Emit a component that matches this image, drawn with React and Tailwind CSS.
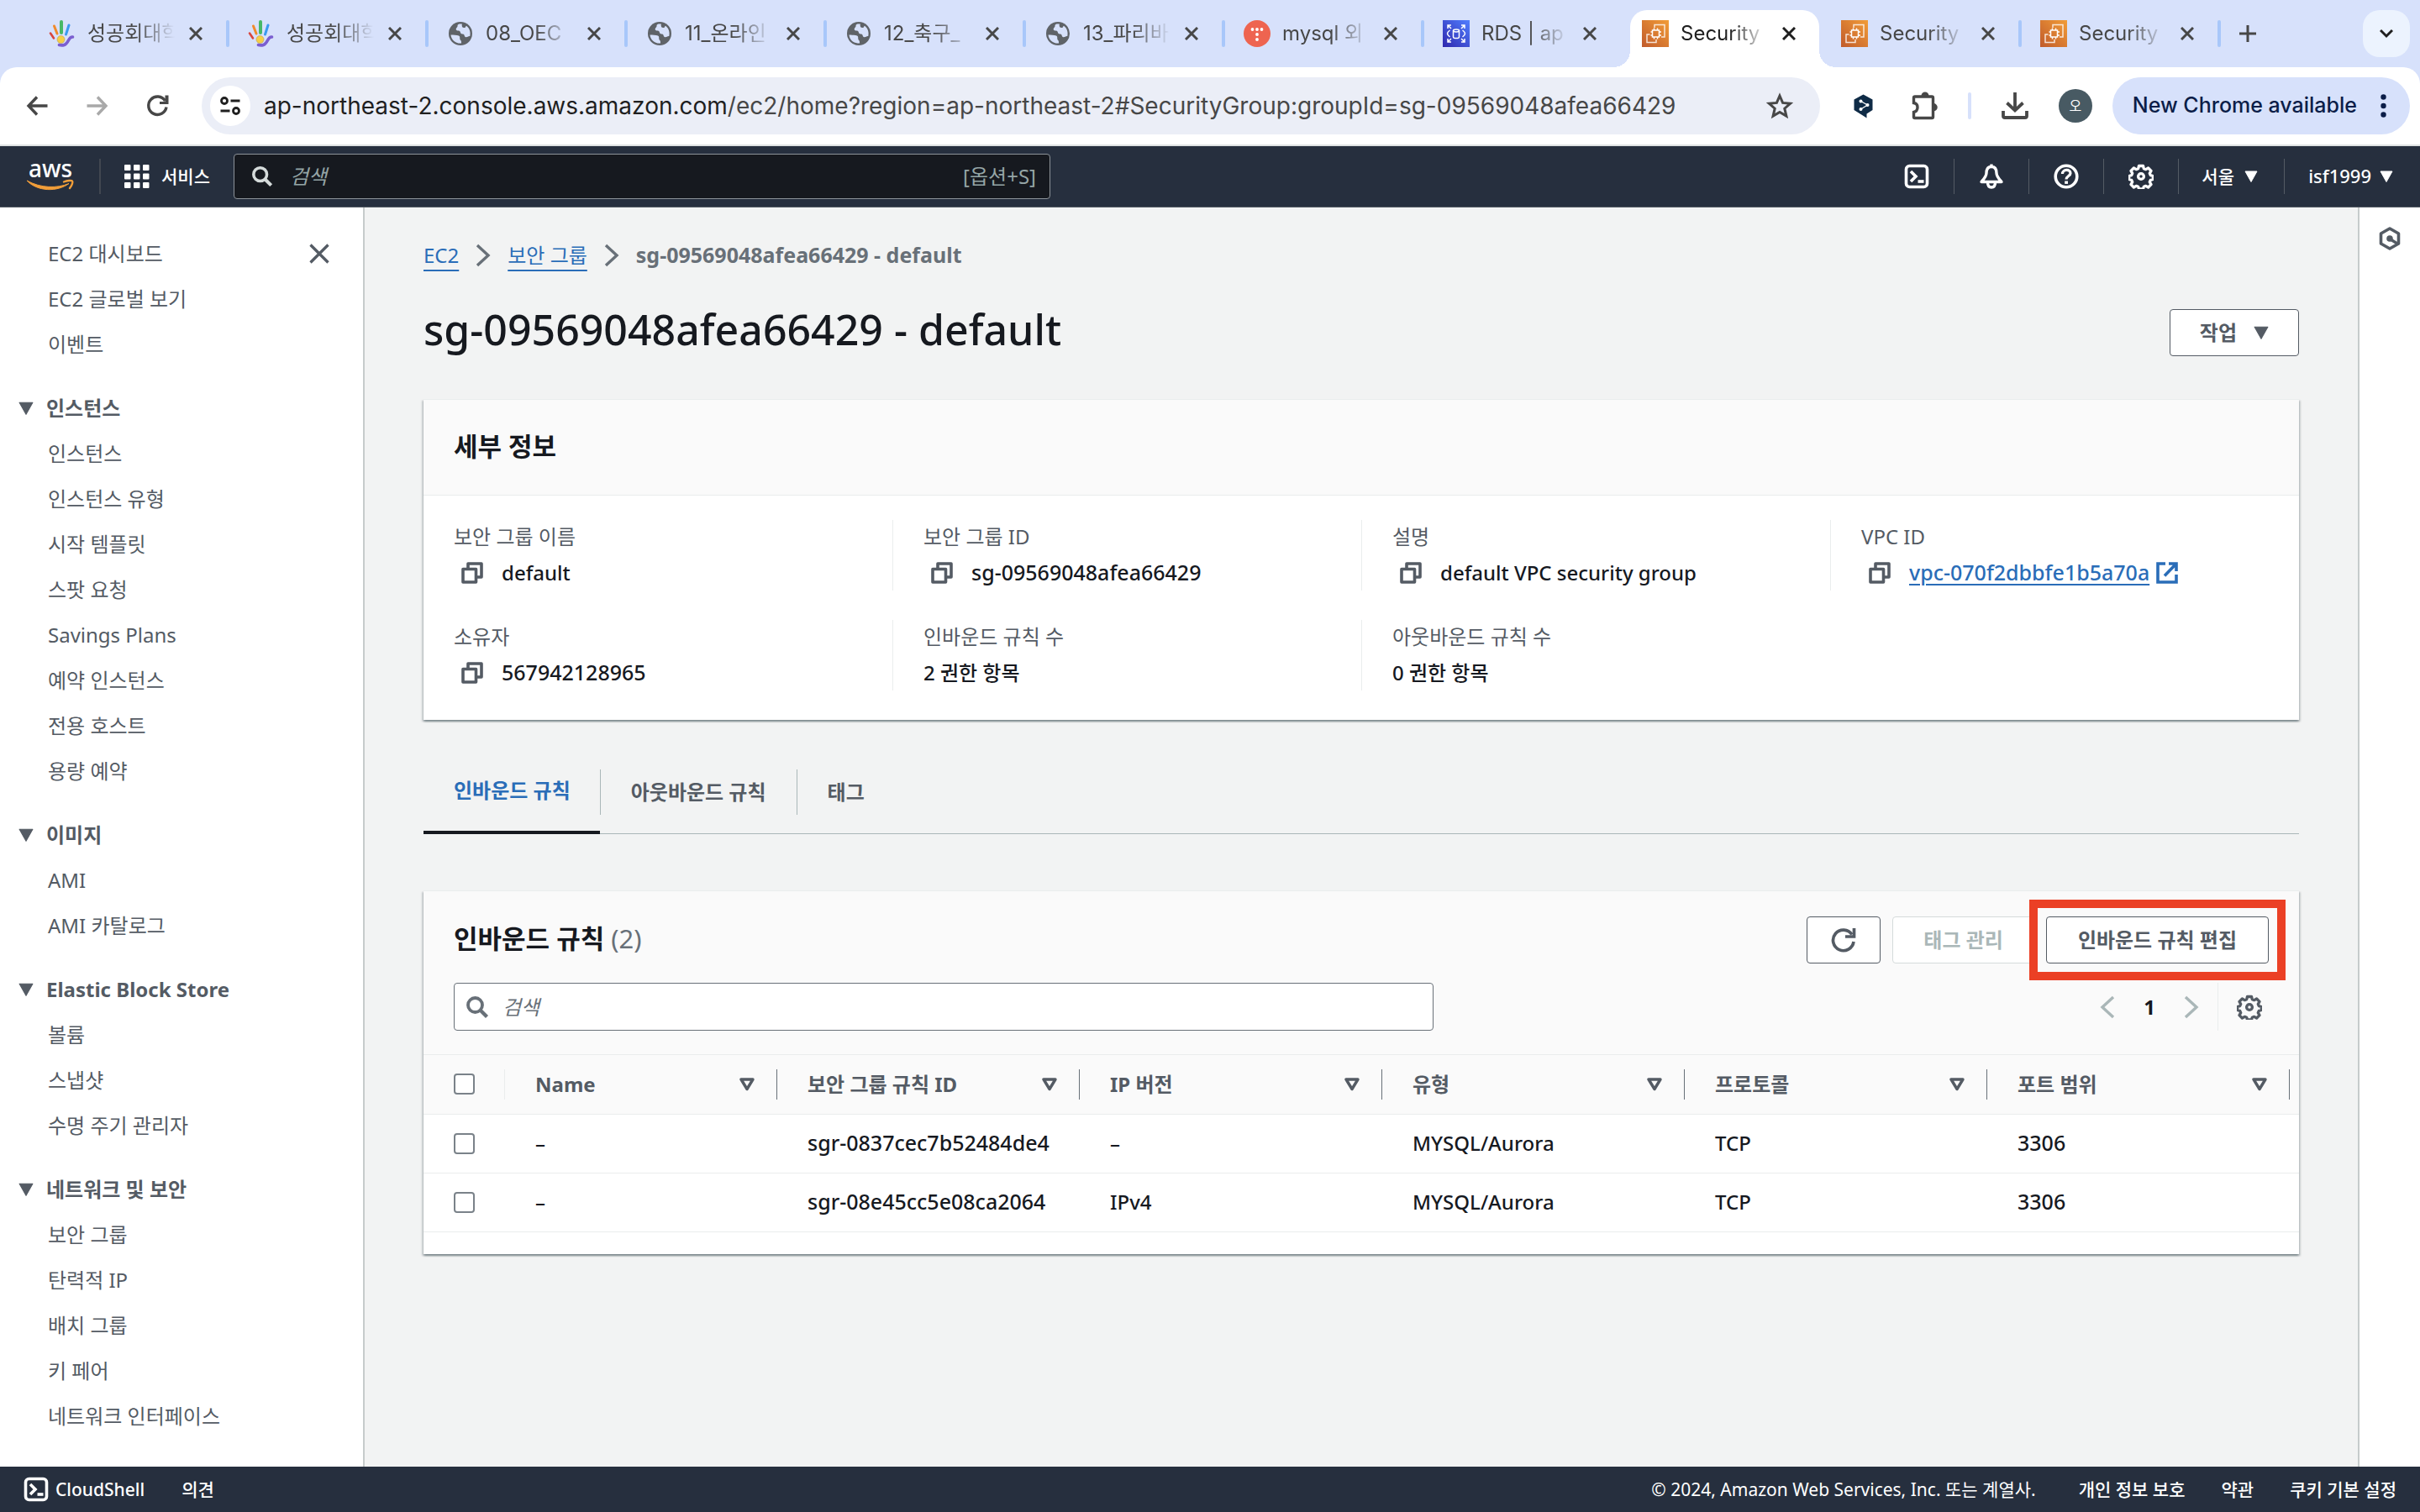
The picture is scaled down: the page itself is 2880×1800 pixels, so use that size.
import React from "react";

/* ---------- icons ---------- */

const Svg = ({ size = "size-8", box = "0 0 16 16", children, ...rest }) => (
  <svg viewBox={box} className={`${size} shrink-0`} fill="none" aria-hidden="true" {...rest}>
    {children}
  </svg>
);

const HandIcon = () => (
  <Svg box="0 0 32 32">
    <g strokeLinecap="round">
      <path d="M2 15.500l4 6" stroke="#d9463d" strokeWidth="2.600" />
      <path d="M6.500 7l3.500 9" stroke="#f08a2c" strokeWidth="3" />
      <path d="M15 2v13" stroke="#46b867" strokeWidth="4" />
      <path d="M24 6l-3.500 11" stroke="#3b9af0" strokeWidth="3" />
      <path d="M28.500 20c-5.500-.5-4.500 8-10 9.500-2 .6-4.500.4-6 0" stroke="#7b5fd0" strokeWidth="3.600" />
    </g>
    <circle cx="14.500" cy="23" r="4.500" fill="#f6cf45" stroke="#b59a5a" strokeWidth=".6" />
  </Svg>
);

const GlobeIcon = () => (
  <Svg box="0 0 32 32">
    <circle cx="16" cy="16" r="14" fill="#5f6368" />
    <path d="M4.500 17.500c3 .3 7-.2 9.500 1 1.800.9 1 2.600 1.400 4.300.2 1.100 1.600 1.200 1.600 3.200v1.600C9.500 28 5 23 4.500 17.500z" fill="#d7e1fb" />
    <path d="M14.500 4.600c-3.500 1.600-.8 2.400-2.800 4.200-1.700 1.500-1 3.600.8 3.700 1.600 0 3.200.2 3.400 2 .1 1.500 1.600 2 3 2 2.400 0 1.200 3.600 3.600 3.800 1.800.2 2.500-1.500 4.800-1.300.9-4.500-.2-9.500-4.300-12.300-1 .6-.8 2-2 2.300-2.500.5-3.800-1.400-3.200-4.600z" fill="#d7e1fb" />
  </Svg>
);

const TistoryIcon = () => (
  <Svg box="0 0 32 32">
    <circle cx="16" cy="16" r="16" fill="#ee6450" />
    <g fill="#fff">
      <circle cx="10.500" cy="11" r="1.900" />
      <circle cx="16" cy="11" r="1.900" />
      <circle cx="21.500" cy="11" r="1.900" />
      <circle cx="16" cy="17" r="1.900" />
      <circle cx="16" cy="23" r="1.900" />
    </g>
  </Svg>
);

const RdsIcon = () => (
  <Svg box="0 0 32 32">
    <defs>
      <linearGradient id="rds" x1="0" y1="1" x2="1" y2="0">
        <stop offset="0" stopColor="#2e27ad" />
        <stop offset="1" stopColor="#527fff" />
      </linearGradient>
    </defs>
    <rect width="32" height="32" fill="url(#rds)" />
    <g stroke="#fff" strokeWidth="1.500">
      <path d="M6 10V6h4M6 6l4 4M22 6h4v4M26 6l-4 4M6 22v4h4M6 26l4-4M26 22v4h-4M26 26l-4-4" />
      <path d="M8.500 12c-2 1.500-3 2.500-3 4s1 2.500 3 4M23.500 12c2 1.500 3 2.500 3 4s-1 2.500-3 4" />
      <ellipse cx="16" cy="12.500" rx="3.500" ry="1.500" />
      <path d="M12.500 12.500v7.500c0 .9 1.600 1.600 3.500 1.600s3.500-.7 3.500-1.600v-7.500" />
    </g>
  </Svg>
);

const Ec2Icon = () => (
  <Svg box="0 0 32 32">
    <defs>
      <linearGradient id="ec2" x1="0" y1="1" x2="1" y2="0">
        <stop offset="0" stopColor="#c05a2b" />
        <stop offset="1" stopColor="#f29d38" />
      </linearGradient>
    </defs>
    <rect width="32" height="32" fill="url(#ec2)" />
    <g stroke="#fff" strokeWidth="1.500">
      <path d="M15 9V5.500h12V20h-4M9.500 17H6v9.500h11V23" opacity=".8" />
      <rect x="12.500" y="12" width="8" height="8" />
      <path d="M14.500 12V9.500M18.500 12V9.500M14.500 22.500V20M18.500 22.500V20M10.500 14h2M10.500 18h2M20.500 14h2.500M20.500 18h2.500" />
    </g>
  </Svg>
);

const CrossIcon = ({ size = "size-4", stroke = 3 }) => (
  <Svg size={size}>
    <path d="M1 1l14 14M15 1L1 15" stroke="currentColor" strokeWidth={stroke} />
  </Svg>
);

const BackIcon = () => (
  <Svg size="size-7" box="0 0 28 28">
    <path d="M14 3.500L4 14l10 10.500M4 14h22.500" stroke="currentColor" strokeWidth="3.400" />
  </Svg>
);

const ForwardIcon = () => (
  <Svg size="size-7" box="0 0 28 28">
    <path d="M14 3.500L24 14 14 24.500M24 14H1.500" stroke="currentColor" strokeWidth="3.400" />
  </Svg>
);

const ReloadIcon = () => (
  <Svg size="size-7" box="0 0 28 28">
    <path d="M24 15.500A10.700 10.700 0 1 1 22.500 8" stroke="currentColor" strokeWidth="3.400" />
    <path d="M26.500 1.500V12H16l0-3h6.500v-7.500z" fill="currentColor" />
  </Svg>
);

const TuneIcon = () => (
  <Svg size="size-6" box="0 0 24 24">
    <g stroke="#1f1f1f" strokeWidth="2.800">
      <circle cx="5" cy="6" r="3.500" />
      <path d="M12.500 6h11M.5 18h11" />
      <circle cx="19" cy="18" r="3.500" />
    </g>
  </Svg>
);

const StarIcon = () => (
  <Svg size="size-8" box="0 0 32 32">
    <path d="M16 4l3.600 8.400 9.100.8-6.900 6 2.100 8.900L16 23.400l-7.900 4.700 2.100-8.900-6.900-6 9.100-.8z" stroke="#474747" strokeWidth="3" />
  </Svg>
);

const DeepLIcon = () => (
  <Svg size="size-8" box="0 0 32 32">
    <path d="M15.500 2.500L26.500 8.500V21L19.500 25.500V30.500l-5-3.200L4.500 21V8.500z" fill="#0f2b46" />
    <path d="M12.500 10.500l8 4.500-8 5" stroke="#fff" strokeWidth="1.300" />
    <g fill="#fff">
      <circle cx="12.500" cy="10.500" r="2" />
      <circle cx="20.500" cy="15" r="2" />
      <circle cx="12.500" cy="20" r="2" />
    </g>
  </Svg>
);

const PuzzleIcon = () => (
  <Svg size="size-9" box="0 0 36 36">
    <path
      d="M5.500 8.500q0-1.500 1.500-1.500H27q1.500 0 1.500 1.500V31q0 1.500-1.500 1.500H7q-1.500 0-1.500-1.500V25.500q4.500-1 4.500-5.700t-4.500-5.300z"
      stroke="#474747"
      strokeWidth="3.400"
    />
    <path d="M14.500 6a4.500 4.500 0 0 1 9 0zM29 15a4.700 4.700 0 0 1 0 9.500z" fill="#474747" />
  </Svg>
);

const DownloadIcon = () => (
  <Svg size="size-9" box="0 0 36 36">
    <path d="M18 2v21M8.500 14.500l9.500 9 9.500-9M4 24v6q0 2 2 2h24q2 0 2-2v-6" stroke="#474747" strokeWidth="3.800" />
  </Svg>
);

const AwsLogo = () => (
  <svg viewBox="0 0 56 42" className="h-[42px] w-14 shrink-0 overflow-visible" role="img" aria-label="AWS">
    <text x="28" y="22" textAnchor="middle" fontFamily="'Noto Sans', sans-serif" fontSize="28" fontWeight="500" fill="#fff">
      aws
    </text>
    <path d="M0 26c12 13 36 14 50 3.500-14 6-34 5.500-50-3.500z" fill="#f19e39" stroke="#f19e39" strokeLinejoin="round" />
    <path d="M44 27.500c4-1.500 9-2 10-1s-.2 5-3 8.500" fill="none" stroke="#f19e39" strokeWidth="2.400" strokeLinecap="round" />
  </svg>
);

const AppsIcon = () => (
  <Svg size="h-7 w-[30px]" box="0 0 30 28">
    {[0, 10.5, 21].map((y) =>
      [0, 11, 22].map((x) => <rect key={`${x}-${y}`} x={x} y={y} width="7.500" height="7" rx="1" fill="#fff" />)
    )}
  </Svg>
);

const SearchIcon = ({ size = "size-7" }) => (
  <Svg size={size} box="0 0 28 28">
    <circle cx="11.500" cy="11.500" r="8.500" stroke="currentColor" strokeWidth="3.800" />
    <path d="M17.500 17.500l8 8" stroke="currentColor" strokeWidth="4.400" />
  </Svg>
);

const ShellIcon = () => (
  <Svg size="size-[30px]" box="0 0 30 30">
    <rect x="2.500" y="2.500" width="25" height="25" rx="4" stroke="#fff" strokeWidth="3.600" />
    <path d="M8 9l6 6-6 6" stroke="#fff" strokeWidth="3.600" />
    <path d="M16.500 21h7" stroke="#fff" strokeWidth="3.600" />
  </Svg>
);

const BellIcon = () => (
  <Svg size="size-[30px]" box="0 0 30 30">
    <path d="M15 3.500c-5 0-6 4-6 7.500 0 4-3 7-6 10.500h24C24 18 21 15 21 11c0-3.500-1-7.500-6-7.500zM15 3V.5" stroke="#fff" strokeWidth="3.400" strokeLinejoin="round" />
    <path d="M10.500 22c0 4 2 6 4.500 6s4.500-2 4.500-6" stroke="#fff" strokeWidth="3.400" />
  </Svg>
);

const HelpIcon = () => (
  <Svg size="size-[30px]" box="0 0 30 30">
    <circle cx="15" cy="15" r="12.800" stroke="#fff" strokeWidth="3.600" />
    <path d="M10.500 12c0-6 9.500-6 9.500-.8 0 3.300-5 3.300-5 7.300" stroke="#fff" strokeWidth="3.200" />
    <rect x="13.200" y="20.500" width="3.800" height="3.400" fill="#fff" />
  </Svg>
);

const GearIcon = ({ size = "size-[30px]" }) => (
  <Svg size={size} box="0 0 30 30">
    <path
      d="M12.500 2.500h5l.8 3.200 2.400 1 2.900-1.700 3.400 3.400-1.700 2.900 1 2.400 3 .8v4l-3 .8-1 2.400 1.700 2.900-3.400 3.400-2.900-1.700-2.400 1-.8 2.700h-5l-.8-2.700-2.400-1-2.900 1.700-3.400-3.400 1.700-2.900-1-2.400-3-.8v-4l3-.8 1-2.400-1.700-2.900 3.400-3.400 2.900 1.700 2.400-1z"
      stroke="currentColor"
      strokeWidth="3.300"
      strokeLinejoin="round"
    />
    <circle cx="15" cy="15" r="3.400" stroke="currentColor" strokeWidth="3.300" />
  </Svg>
);

const CaretIcon = ({ size = "size-4" }) => (
  <Svg size={size}>
    <path d="M1 2h14L8 14.500z" fill="currentColor" stroke="currentColor" strokeLinejoin="round" />
  </Svg>
);

const SortIcon = () => (
  <Svg size="h-4 w-[18px]" box="0 0 18 16">
    <path d="M2 2h14L9 13.500z" stroke="currentColor" strokeWidth="3.400" strokeLinejoin="round" />
  </Svg>
);

const ChevronIcon = ({ flip = false }) => (
  <Svg size="h-7 w-[18px]" box="0 0 18 28">
    <path d={flip ? "M16 2L3 14l13 12" : "M2 2l13 12L2 26"} stroke="currentColor" strokeWidth="3.400" />
  </Svg>
);

const CopyIcon = () => (
  <Svg size="size-[26px]" box="0 0 26 26">
    <path d="M2 8.500h15.500V24H2zM8 8V2h16v16h-6" stroke="#545b64" strokeWidth="3.600" strokeLinejoin="round" />
  </Svg>
);

const ExternalIcon = () => (
  <Svg size="size-[26px]" box="0 0 26 26">
    <path d="M11 2H2v22h22v-9M15 2h9v9M24 2L10 16.500" stroke="currentColor" strokeWidth="3.600" />
  </Svg>
);

const RefreshIcon = () => (
  <Svg size="size-8" box="0 0 32 32">
    <path d="M28 18A12.300 12.300 0 1 1 26 9.500" stroke="currentColor" strokeWidth="3.700" />
    <path d="M28.500 2v10H18" stroke="currentColor" strokeWidth="3.700" />
  </Svg>
);

const InfoHexIcon = () => (
  <Svg size="size-7" box="0 0 28 28">
    <path d="M14 2l10.500 6v12L14 26 3.500 20V8z" stroke="#545b64" strokeWidth="3.600" strokeLinejoin="round" />
    <circle cx="14" cy="14" r="3.800" fill="#545b64" />
    <path d="M15 15l8 5" stroke="#545b64" strokeWidth="3.400" />
  </Svg>
);

/* ---------- data ---------- */

const browserTabs = [
  { icon: HandIcon, title: "성공회대학" },
  { icon: HandIcon, title: "성공회대학" },
  { icon: GlobeIcon, title: "08_OEC" },
  { icon: GlobeIcon, title: "11_온라인" },
  { icon: GlobeIcon, title: "12_축구_" },
  { icon: GlobeIcon, title: "13_파리바" },
  { icon: TistoryIcon, title: "mysql 외" },
  { icon: RdsIcon, title: "RDS | ap", noSeparator: true },
  { icon: Ec2Icon, title: "Security", active: true, noSeparator: true },
  { icon: Ec2Icon, title: "Security" },
  { icon: Ec2Icon, title: "Security" },
];

const sideSections = [
  { title: "인스턴스", items: ["인스턴스", "인스턴스 유형", "시작 템플릿", "스팟 요청", "Savings Plans", "예약 인스턴스", "전용 호스트", "용량 예약"] },
  { title: "이미지", items: ["AMI", "AMI 카탈로그"] },
  { title: "Elastic Block Store", items: ["볼륨", "스냅샷", "수명 주기 관리자"] },
  { title: "네트워크 및 보안", items: ["보안 그룹", "탄력적 IP", "배치 그룹", "키 페어", "네트워크 인터페이스"] },
];

const details = [
  { label: "보안 그룹 이름", value: "default", copy: true },
  { label: "보안 그룹 ID", value: "sg-09569048afea66429", copy: true, id: true },
  { label: "설명", value: "default VPC security group", copy: true },
  { label: "VPC ID", value: "vpc-070f2dbbfe1b5a70a", copy: true, id: true, link: true },
  { label: "소유자", value: "567942128965", copy: true, id: true },
  { label: "인바운드 규칙 수", value: "2 권한 항목" },
  { label: "아웃바운드 규칙 수", value: "0 권한 항목" },
];

const columns = ["Name", "보안 그룹 규칙 ID", "IP 버전", "유형", "프로토콜", "포트 범위"];

const rules = [
  ["–", "sgr-0837cec7b52484de4", "–", "MYSQL/Aurora", "TCP", "3306"],
  ["–", "sgr-08e45cc5e08ca2064", "IPv4", "MYSQL/Aurora", "TCP", "3306"],
];

const idColumns = [1, 5];

/* ---------- browser frame ---------- */

function BrowserTab({ icon: Icon, title, active, noSeparator }) {
  return (
    <div className="relative flex h-[68px] max-w-[237px] flex-1 items-center pb-3 pl-[22px]">
      {active && (
        <div className="absolute inset-y-0 right-1 left-2 rounded-t-[20px] bg-white">
          <span className="absolute bottom-0 -left-5 size-5 bg-[radial-gradient(circle_at_0_0,transparent_20px,white_20px)]" />
          <span className="absolute -right-5 bottom-0 size-5 bg-[radial-gradient(circle_at_100%_0,transparent_20px,white_20px)]" />
        </div>
      )}
      <button type="button" className={`relative flex items-center gap-[14px] ${active ? "text-[#1f1f1f]" : ""}`}>
        <Icon />
        <span className="w-[113px] text-left text-2xl leading-8 whitespace-nowrap [mask-image:linear-gradient(to_right,black_58px,transparent_104px)]">
          {title}
        </span>
      </button>
      <button
        type="button"
        aria-label={`${title} 닫기`}
        className={`relative grid size-8 shrink-0 place-items-center ${active ? "text-[#1f1f1f]" : ""}`}
      >
        <CrossIcon />
      </button>
      {!noSeparator && <span className="ml-auto h-8 w-1 rounded-full bg-[#a8c7fa]" />}
    </div>
  );
}

function BrowserChrome() {
  return (
    <div className="bg-[#d7e1fb] font-['Inter','Noto_Sans_CJK_KR',sans-serif] text-[#474747]">
      <div className="flex h-20 items-end pl-9">
        {browserTabs.map((tab, i) => (
          <BrowserTab key={i} {...tab} />
        ))}
        <button type="button" aria-label="새 탭" className="mb-3 ml-1 grid size-14 shrink-0 place-items-center">
          <Svg size="size-5" box="0 0 20 20">
            <path d="M10 0v20M0 10h20" stroke="currentColor" strokeWidth="3" />
          </Svg>
        </button>
        <button
          type="button"
          aria-label="탭 검색"
          className="mr-3 mb-3 ml-auto grid size-14 shrink-0 place-items-center rounded-[20px] bg-[#ecf3fe] text-[#1f1f1f]"
        >
          <Svg size="size-4">
            <path d="M1 4l7 7 7-7" stroke="currentColor" strokeWidth="3" />
          </Svg>
        </button>
      </div>
      <div className="flex h-[94px] items-center rounded-t-[20px] border-b-2 border-[#dfe3e3] bg-white pr-3 pl-2">
        <button type="button" aria-label="뒤로" className="grid w-[72px] place-items-center">
          <BackIcon />
        </button>
        <button type="button" aria-label="앞으로" disabled className="grid w-[72px] place-items-center text-[#a9a9a9]">
          <ForwardIcon />
        </button>
        <button type="button" aria-label="새로고침" className="grid w-[72px] place-items-center">
          <ReloadIcon />
        </button>
        <div className="ml-4 flex h-[68px] flex-1 items-center rounded-full bg-[#ebeef7] pr-8 pl-[10px]">
          <button type="button" aria-label="사이트 정보" className="grid size-12 shrink-0 place-items-center rounded-full bg-white">
            <TuneIcon />
          </button>
          <p className="ml-4 flex-1 text-[28px] leading-10 whitespace-nowrap">
            <span className="text-[#1f1f1f]">ap-northeast-2.console.aws.amazon.com</span>
            /ec2/home?region=ap-northeast-2#SecurityGroup:groupId=sg-09569048afea66429
          </p>
          <button type="button" aria-label="북마크">
            <StarIcon />
          </button>
        </div>
        <button type="button" aria-label="DeepL" className="ml-4 grid w-[72px] place-items-center">
          <DeepLIcon />
        </button>
        <button type="button" aria-label="확장 프로그램" className="grid w-[72px] place-items-center">
          <PuzzleIcon />
        </button>
        <span className="mx-4 h-8 w-1 rounded-full bg-[#d7e1fb]" />
        <button type="button" aria-label="다운로드" className="grid w-[72px] place-items-center">
          <DownloadIcon />
        </button>
        <button type="button" aria-label="프로필" className="grid w-[72px] place-items-center">
          <span className="grid size-10 place-items-center rounded-full bg-[#485a63] text-base leading-none text-white">오</span>
        </button>
        <button
          type="button"
          className="ml-2 flex h-[68px] items-center gap-7 rounded-full bg-[#d7e1fb] pr-7 pl-6 text-[25px] font-medium whitespace-nowrap text-[#0b1d48]"
        >
          New Chrome available
          <Svg size="h-7 w-[7px]" box="0 0 7 28">
            <circle cx="3.500" cy="3.500" r="3.200" fill="currentColor" />
            <circle cx="3.500" cy="14" r="3.200" fill="currentColor" />
            <circle cx="3.500" cy="24.500" r="3.200" fill="currentColor" />
          </Svg>
        </button>
      </div>
    </div>
  );
}

/* ---------- console ---------- */

function ConsoleNav() {
  const cell = "flex h-[42px] items-center justify-center border-r border-[#545b64]";
  return (
    <header className="flex h-[73px] items-center border-b border-[#545b64] bg-[#262f3e] pl-8 text-[22px] font-medium text-white">
      <a href="#home">
        <AwsLogo />
      </a>
      <span className="ml-[30px] h-[42px] w-[2px] bg-[#414750]" />
      <button type="button" className="mx-7 flex items-center gap-[14px] text-[21px] whitespace-nowrap">
        <AppsIcon />
        서비스
      </button>
      <label className="flex h-[54px] w-full max-w-[972px] items-center rounded-[4px] border border-[#8d9399] bg-[#16191f] pr-4 pl-5">
        <SearchIcon size="size-[26px] text-[#d5dbdb]" />
        <input
          type="text"
          placeholder="검색"
          aria-label="서비스 검색"
          className="ml-5 min-w-0 flex-1 bg-transparent text-2xl font-normal outline-none placeholder:text-[#95a5a6] placeholder:italic"
        />
        <span className="text-2xl font-normal text-[#95a5a6]">[옵션+S]</span>
      </label>
      <div className="ml-auto flex shrink-0">
        <button type="button" aria-label="CloudShell" className={`${cell} w-[89px]`}>
          <ShellIcon />
        </button>
        <button type="button" aria-label="알림" className={`${cell} w-[89px]`}>
          <BellIcon />
        </button>
        <button type="button" aria-label="도움말" className={`${cell} w-[89px]`}>
          <HelpIcon />
        </button>
        <button type="button" aria-label="설정" className={`${cell} w-[89px]`}>
          <GearIcon />
        </button>
        <button type="button" className={`${cell} w-[126px] gap-3 pr-1 text-[21px]`}>
          서울
          <CaretIcon />
        </button>
        <button type="button" className="flex h-[42px] items-center gap-[10px] pr-8 pl-7">
          isf1999
          <CaretIcon />
        </button>
      </div>
    </header>
  );
}

function SideItem({ children }) {
  return (
    <li className="h-[54px] pl-[57px] leading-[54px]">
      <a href="#item">{children}</a>
    </li>
  );
}

function Sidebar() {
  return (
    <aside className="w-[434px] shrink-0 border-r-2 border-[#c6cbcb] bg-white pt-7 text-2xl text-[#545b64]">
      <div className="flex items-start justify-between pr-10">
        <ul>
          <SideItem>EC2 대시보드</SideItem>
          <SideItem>EC2 글로벌 보기</SideItem>
          <SideItem>이벤트</SideItem>
        </ul>
        <button type="button" aria-label="탐색 닫기" className="grid h-[54px] w-6 place-items-center">
          <CrossIcon size="size-6" stroke={2.2} />
        </button>
      </div>
      {sideSections.map((s) => (
        <section key={s.title} className="mt-[21px]">
          <h3>
            <button type="button" className="flex h-[55px] items-center gap-[15px] pl-[22px] font-bold">
              <CaretIcon size="size-[18px]" />
              {s.title}
            </button>
          </h3>
          <ul>
            {s.items.map((t) => (
              <SideItem key={t}>{t}</SideItem>
            ))}
          </ul>
        </section>
      ))}
    </aside>
  );
}

const card =
  "border-t border-[#eaeded] bg-white shadow-[0_2px_2px_0_rgba(0,28,36,0.3),2px_2px_2px_0_rgba(0,28,36,0.15),-2px_2px_2px_0_rgba(0,28,36,0.15)]";

function DetailsCard() {
  return (
    <section className={`mt-[51px] ${card}`}>
      <h2 className="h-[114px] border-b border-[#eaeded] bg-[#fafafa] pl-9 text-[31px] leading-[110px] font-bold">세부 정보</h2>
      <dl className="grid grid-cols-4 gap-y-[35px] pt-[29px] pb-[35px]">
        {details.map((d, i) => (
          <div key={d.label} className={i % 4 ? "border-l border-[#eaeded] pl-9" : "pl-9"}>
            <dt className="leading-10 text-[#545b64]">{d.label}</dt>
            <dd className={`flex h-11 items-center pt-[2px] font-medium ${d.id ? "text-[25px]" : ""}`}>
              {d.copy && (
                <button type="button" aria-label={`${d.label} 복사`} className="mr-[22px] ml-[9px]">
                  <CopyIcon />
                </button>
              )}
              {d.link ? (
                <a href="#vpc" className="flex items-center gap-2 text-[#2a6db8] underline decoration-2 underline-offset-4">
                  {d.value}
                  <ExternalIcon />
                </a>
              ) : (
                d.value
              )}
            </dd>
          </div>
        ))}
      </dl>
    </section>
  );
}

function DetailTabs() {
  const divider = <li aria-hidden="true" className="h-[54px] w-px self-center bg-[#aab7b8]" />;
  return (
    <ul className="mt-9 flex h-[100px] border-b border-[#aab7b8] font-bold text-[#545b64]">
      <li className="-mb-px border-b-4 border-[#16191f]">
        <button type="button" className="h-full pr-[35px] pl-9 text-[#2a6db8]">
          인바운드 규칙
        </button>
      </li>
      {divider}
      <li>
        <button type="button" className="h-full px-9">
          아웃바운드 규칙
        </button>
      </li>
      {divider}
      <li>
        <button type="button" className="h-full px-9">
          태그
        </button>
      </li>
    </ul>
  );
}

const checkbox = "block size-[25px] appearance-none rounded-[4px] border-2 border-[#7a8289] bg-white";
const outlineButton = "flex h-14 items-center rounded-[4px] border border-[#545b64] bg-white font-bold";

function RulesCard() {
  return (
    <section className={`mt-[67px] pb-[26px] ${card}`}>
      <div className="border-b border-[#eaeded] bg-[#fafafa] px-9 pt-[30px] pb-7">
        <div className="flex items-center justify-between">
          <h2 className="pb-1 text-[31px] leading-[52px] font-bold">
            인바운드 규칙 <span className="font-normal text-[#687078]">(2)</span>
          </h2>
          <div className="flex gap-[14px] text-[#545b64]">
            <button type="button" aria-label="새로 고침" className={`${outlineButton} px-[27px]`}>
              <RefreshIcon />
            </button>
            <button type="button" disabled className="h-14 rounded-[4px] border border-[#d5dbdb] bg-white px-9 font-bold text-[#aab7b8]">
              태그 관리
            </button>
            <div className="relative">
              <button type="button" className={`${outlineButton} px-[37px]`}>
                인바운드 규칙 편집
              </button>
              <span className="pointer-events-none absolute -inset-x-5 -inset-y-5 border-[10px] border-[#eb4025]" />
            </div>
          </div>
        </div>
        <div className="mt-[23px] flex items-center justify-between">
          <label className="flex h-[57px] w-full max-w-[1166px] items-center rounded-[4px] border border-[#687078] bg-white pl-[13px] text-[#687078]">
            <SearchIcon />
            <input
              type="text"
              placeholder="검색"
              aria-label="규칙 검색"
              className="ml-4 min-w-0 flex-1 bg-transparent outline-none placeholder:text-[#687078] placeholder:italic"
            />
          </label>
          <div className="flex h-[57px] items-center pr-2">
            <button type="button" aria-label="이전 페이지" disabled className="text-[#aab7b8]">
              <ChevronIcon flip />
            </button>
            <button type="button" className="px-[34px] font-bold">
              1
            </button>
            <button type="button" aria-label="다음 페이지" disabled className="text-[#aab7b8]">
              <ChevronIcon />
            </button>
            <span className="mr-[22px] ml-[22px] h-full w-px bg-[#eaeded]" />
            <button type="button" aria-label="기본 설정" className="text-[#545b64]">
              <GearIcon />
            </button>
          </div>
        </div>
      </div>
      <table className="w-full table-fixed text-left">
        <colgroup>
          <col className="w-[97px]" />
          <col className="w-[324px]" />
          <col className="w-[360px]" />
          <col className="w-[360px]" />
          <col className="w-[360px]" />
          <col className="w-[360px]" />
          <col />
        </colgroup>
        <thead className="bg-[#fafafa] text-[#545b64]">
          <tr className="h-[70px] border-b border-[#eaeded]">
            <th className="p-0">
              <div className="flex h-9 items-center border-r border-[#eaeded] pl-9">
                <input type="checkbox" aria-label="모두 선택" className={checkbox} />
              </div>
            </th>
            {columns.map((c, i) => (
              <th key={c} className={i === columns.length - 1 ? "py-0 pr-[11px] pl-0" : "p-0"}>
                <div className="flex h-9 items-center justify-between border-r border-[#687078] pr-[26px] pl-9">
                  {c}
                  <button type="button" aria-label={`${c} 정렬`}>
                    <SortIcon />
                  </button>
                </div>
              </th>
            ))}
          </tr>
        </thead>
        <tbody className="font-medium">
          {rules.map((r) => (
            <tr key={r[1]} className="h-[70px] border-b border-[#eaeded]">
              <td className="py-0 pr-0 pl-9">
                <input type="checkbox" aria-label={`${r[1]} 선택`} className={checkbox} />
              </td>
              {r.map((v, i) => (
                <td key={i} className={`py-0 pr-0 pl-9 ${idColumns.includes(i) ? "text-[25px]" : ""}`}>
                  {v}
                </td>
              ))}
            </tr>
          ))}
        </tbody>
      </table>
    </section>
  );
}

function Footer() {
  return (
    <footer className="flex h-[54px] items-center justify-between bg-[#262f3e] px-7 text-[21px] font-medium text-white">
      <div className="flex items-center gap-11">
        <a href="#shell" className="flex items-center gap-2">
          <ShellIcon />
          CloudShell
        </a>
        <a href="#feedback">의견</a>
      </div>
      <div className="flex items-center gap-[43px]">
        <span className="pr-2 font-normal">© 2024, Amazon Web Services, Inc. 또는 계열사.</span>
        <a href="#privacy">개인 정보 보호</a>
        <a href="#terms">약관</a>
        <a href="#cookies">쿠키 기본 설정</a>
      </div>
    </footer>
  );
}

export default function App() {
  return (
    <div className="flex min-h-screen flex-col bg-[#f2f3f3] font-['Noto_Sans','Noto_Sans_CJK_KR',sans-serif] text-2xl text-[#16191f]">
      <BrowserChrome />
      <ConsoleNav />
      <div className="flex flex-1">
        <Sidebar />
        <main className="min-w-0 flex-1 px-[70px] pt-[41px]">
          <nav aria-label="경로" className="flex h-8 items-center gap-5 text-[#687078]">
            <a href="#ec2" className="text-[#2a6db8] underline decoration-2 underline-offset-8">
              EC2
            </a>
            <ChevronIcon />
            <a href="#groups" className="text-[#2a6db8] underline decoration-2 underline-offset-8">
              보안 그룹
            </a>
            <ChevronIcon />
            <span className="text-[25px] font-bold">sg-09569048afea66429 - default</span>
          </nav>
          <div className="mt-12 flex h-14 items-center justify-between">
            <h1 className="pb-2 text-[50px] leading-[56px] font-medium">sg-09569048afea66429 - default</h1>
            <button type="button" className={`${outlineButton} gap-5 px-[35px] text-[#545b64]`}>
              작업
              <CaretIcon size="size-[18px]" />
            </button>
          </div>
          <DetailsCard />
          <DetailTabs />
          <RulesCard />
        </main>
        <aside className="w-[74px] shrink-0 border-l-2 border-[#c6cbcb] bg-white pt-[23px]">
          <button type="button" aria-label="정보" className="mx-auto block">
            <InfoHexIcon />
          </button>
        </aside>
      </div>
      <Footer />
    </div>
  );
}
